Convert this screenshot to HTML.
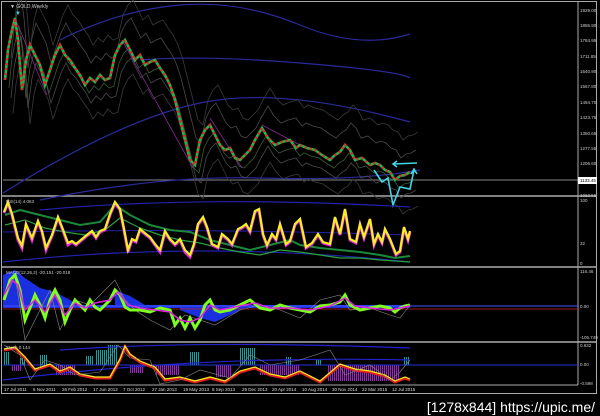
<!DOCTYPE html>
<html><head><meta charset="utf-8"><style>
html,body{margin:0;padding:0;background:#000;width:600px;height:416px;overflow:hidden}
svg{display:block}
text{font-family:"Liberation Sans",sans-serif}
</style></head><body>
<svg width="600" height="416" viewBox="0 0 600 416" xmlns="http://www.w3.org/2000/svg">
<defs>
<polyline id="pr" fill="none" points="5,80 8,50 12,30 15,18 18,40 22,90 26,60 30,45 35,55 40,65 45,85 50,70 55,55 60,45 65,55 70,60 75,68 80,75 85,85 90,78 95,82 100,75 105,80 110,78 115,55 120,45 125,40 130,50 135,60 140,55 145,65 150,62 155,60 160,68 165,75 170,85 175,100 180,120 185,140 190,160 195,165 200,140 205,130 210,125 215,135 220,145 225,150 230,148 235,158 240,160 245,155 250,150 255,140 262,128 268,138 275,145 282,142 290,140 296,148 300,145 307,148 315,150 322,155 330,160 335,155 340,152 345,145 350,150 355,160 362,158 370,165 375,163 380,165 385,170 390,172 395,180 400,176 405,175 410,172"/>
<pattern id="st" width="2" height="10" patternUnits="userSpaceOnUse"><rect width="1" height="10" fill="#18a0a0"/></pattern>
<pattern id="sp" width="2" height="10" patternUnits="userSpaceOnUse"><rect width="1" height="10" fill="#a020c8"/></pattern>
</defs>
<rect width="600" height="416" fill="#000"/>
<rect x="1.5" y="1.5" width="595" height="392" fill="none" stroke="#aaa" stroke-width="1"/>
<line x1="2" y1="196" x2="597" y2="196" stroke="#aaa" stroke-width="1.5"/>
<line x1="2" y1="267" x2="597" y2="267" stroke="#aaa" stroke-width="1.5"/>
<line x1="2" y1="342" x2="597" y2="342" stroke="#aaa" stroke-width="1.5"/>
<line x1="2" y1="385" x2="578" y2="385" stroke="#aaa" stroke-width="1"/>
<line x1="578" y1="2" x2="578" y2="385" stroke="#aaa" stroke-width="1"/>
<line x1="3" y1="180" x2="578" y2="180" stroke="#888" stroke-width="1"/>

<g fill="none" stroke="#2a2a9a" stroke-width="1.2">
<path d="M3,193 Q120,120 200,103 T410,122"/>
<path d="M60,40 Q120,10 180,5 T300,25 T410,34"/>
<path d="M140,60 Q200,55 300,63 T410,78"/>
<path d="M40,200 Q160,175 260,178 T420,170"/>
</g>
<g stroke-width="0.8">
<use href="#pr" transform="translate(6,-22)" stroke="#4a4a4a"/>
<use href="#pr" transform="translate(8,-40)" stroke="#3a3a3a"/>
<use href="#pr" transform="translate(6,18)" stroke="#4a4a4a"/>
<use href="#pr" transform="translate(8,34)" stroke="#3a3a3a"/>
<use href="#pr" transform="translate(4,8)" stroke="#3a5a3a"/>
</g>
<g stroke="#8a2a9a" stroke-width="0.8" fill="none">
<path d="M15,18 L47,95"/><path d="M122,40 L193,168"/><path d="M210,118 L242,168"/><path d="M262,125 L300,145"/>
</g>
<use href="#pr" stroke="#1db84a" stroke-width="2.6"/>
<use href="#pr" stroke="#e0262a" stroke-width="2.6" stroke-dasharray="2,3"/>
<g stroke="#3fd6e6" stroke-width="1.6" fill="none">
<polyline points="374,170 382,182 388,178 393,205 400,187 410,189 414,170"/>
<line x1="393" y1="164" x2="417" y2="163"/>
<polyline points="397,161 393,164 397,167"/>
<polyline points="411,174 414,169 417,174"/>
</g>
<text x="10" y="8" font-size="5" fill="#ccc">▼ GOLD,Weekly</text>
<text x="15" y="15" font-size="6" fill="#3fd6e6">▼</text>

<g fill="none">
<path d="M3,262 Q200,240 410,262" stroke="#2222aa" stroke-width="1.2"/>
<path d="M40,210 Q200,195 410,207" stroke="#2222aa" stroke-width="1.2"/>
<path d="M3,232 Q200,228 410,235" stroke="#2222aa" stroke-width="1"/>
<polyline stroke="#1a8a3a" stroke-width="2" points="5,215 20,210 40,215 60,220 80,225 100,222 115,205 130,215 150,225 170,230 190,232 210,240 230,245 250,250 270,245 290,240 300,245 320,248 340,250 360,252 380,255 395,258 410,256"/>
<polyline stroke="#2aa040" stroke-width="1.2" points="5,225 25,220 45,228 65,232 85,235 105,230 120,218 140,228 160,235 180,240 200,243 220,248 240,252 260,255 280,250 300,252 320,255 340,258 360,258 380,260 410,262"/>
<polyline stroke="#e020e0" stroke-width="3" points="4,213 8,203 12,215 18,240 22,248 26,225 32,240 38,222 42,232 46,250 52,236 58,218 62,228 68,245 72,242 76,245 82,240 88,235 92,232 96,238 100,232 105,230 110,215 115,203 120,210 124,230 128,252 132,240 136,242 140,230 146,235 150,238 155,245 160,252 165,232 170,240 175,245 180,240 185,252 190,257 194,245 198,225 203,218 207,228 212,245 218,248 222,235 228,240 232,245 238,230 242,228 246,225 250,232 255,212 259,210 263,235 267,246 272,235 276,240 280,225 286,245 290,242 295,225 300,220 306,248 312,244 318,235 323,243 330,245 335,218 340,235 345,210 350,240 356,243 360,225 364,238 370,220 374,245 378,235 382,243 385,230 390,240 396,255 400,252 404,228 408,240 410,232"/>
<polyline stroke="#f5f020" stroke-width="2.2" points="4,212 8,202 12,214 18,238 22,246 26,224 32,238 38,221 42,231 46,248 52,235 58,217 62,227 68,243 72,241 76,244 82,239 88,234 92,231 96,237 100,231 105,229 110,214 115,202 120,209 124,229 128,250 132,239 136,241 140,229 146,234 150,237 155,244 160,250 165,231 170,239 175,244 180,239 185,250 190,255 194,244 198,224 203,217 207,227 212,244 218,247 222,234 228,239 232,244 238,229 242,227 246,224 250,231 255,211 259,209 263,234 267,245 272,234 276,239 280,224 286,244 290,241 295,224 300,219 306,247 312,243 318,234 323,242 330,244 335,217 340,234 345,209 350,239 356,242 360,224 364,237 370,219 374,244 378,234 382,242 385,229 390,239 396,254 400,251 404,227 408,239 410,231"/>
</g>
<text x="6" y="203" font-size="4.5" fill="#ccc">RSI(14) 4.063</text>

<path d="M3,275 L15,270 L25,278 L40,288 L55,292 L70,300 L80,308 L3,308 Z" fill="#1a30e0"/>
<path d="M115,290 L130,296 L145,305 L150,308 L115,308 Z" fill="#1a30e0"/>
<path d="M180,310 L200,318 L215,322 L230,315 L245,308 L180,308 Z" fill="#1a30e0"/>
<rect x="3" y="305" width="407" height="3" fill="#1a30e0"/>
<line x1="3" y1="306" x2="578" y2="306" stroke="#4455ff" stroke-width="1"/>
<line x1="3" y1="309" x2="578" y2="309" stroke="#c02020" stroke-width="0.8"/>
<g fill="none">
<polyline stroke="#888" stroke-width="0.6" points="5,300 15,275 25,340 35,320 50,290 60,330 75,300 90,305 105,290 115,280 125,300 135,310 150,320 170,330 185,315 200,320 215,325 240,310 260,305 280,310 300,318 320,300 340,295 350,310 370,308 390,315 400,318 410,305"/>
<polyline stroke="#7dff20" stroke-width="3" points="4,300 10,280 15,275 20,290 25,320 30,308 35,295 40,305 45,318 50,300 55,290 60,300 65,322 70,310 75,300 80,305 85,310 90,300 95,307 100,310 110,300 115,290 120,295 125,307 130,310 140,310 150,312 160,308 170,310 175,325 180,318 185,328 190,318 195,328 200,320 205,305 210,300 215,310 220,312 230,310 240,305 250,300 260,308 270,310 280,305 290,308 300,310 310,312 320,306 330,305 340,302 345,295 350,305 360,310 370,308 380,306 390,308 395,312 400,308 405,306 410,305"/>
<polyline stroke="#e020e0" stroke-width="1.5" points="4,295 12,280 18,285 25,310 35,300 45,312 55,295 65,315 75,303 85,308 95,303 110,300 118,292 128,305 140,308 155,310 170,312 180,320 190,322 200,318 210,305 220,310 240,306 255,303 270,308 290,308 310,310 330,306 345,298 355,306 370,308 390,310 410,306"/>
</g>
<text x="6" y="274" font-size="4.5" fill="#ccc">MACD(12,26,2) -20.151 -20.018</text>

<g fill="url(#st)">
<rect x="4" y="352" width="6" height="13"/><rect x="20" y="358" width="6" height="7"/><rect x="40" y="355" width="8" height="10"/><rect x="86" y="356" width="8" height="9"/><rect x="96" y="350" width="12" height="15"/><rect x="108" y="345" width="10" height="20"/><rect x="190" y="352" width="10" height="13"/><rect x="240" y="348" width="16" height="17"/><rect x="285" y="357" width="6" height="8"/><rect x="316" y="360" width="6" height="5"/><rect x="404" y="357" width="6" height="8"/>
</g>
<g fill="url(#sp)">
<rect x="12" y="365" width="10" height="6"/><rect x="55" y="365" width="20" height="10"/><rect x="130" y="365" width="14" height="8"/><rect x="155" y="365" width="25" height="10"/><rect x="215" y="365" width="16" height="12"/><rect x="260" y="365" width="40" height="10"/><rect x="328" y="365" width="72" height="16"/>
</g>
<g fill="none">
<path d="M3,380 Q200,355 410,360" stroke="#2222cc" stroke-width="1.2"/>
<path d="M60,350 Q200,340 410,348" stroke="#2222cc" stroke-width="1.2"/>
<line x1="3" y1="365" x2="578" y2="365" stroke="#2233dd" stroke-width="1"/>
<polyline stroke="#e02020" stroke-width="3" points="4,350 15,348 25,358 35,370 50,365 60,372 70,368 80,375 95,378 110,378 120,360 125,347 130,355 140,362 155,368 165,380 180,378 195,382 210,378 225,382 240,372 255,368 270,375 285,378 300,372 320,382 340,365 355,370 370,372 385,376 395,382 405,378 410,380"/>
<polyline stroke="#f5f020" stroke-width="1.2" points="4,349 15,347 25,357 35,369 50,364 60,371 70,367 80,374 95,377 110,377 120,359 125,346 130,354 140,361 155,367 165,379 180,377 195,381 210,377 225,381 240,371 255,367 270,374 285,377 300,371 320,381 340,364 355,369 370,371 385,375 395,381 405,377 410,379"/>
<polyline stroke="#888" stroke-width="0.6" points="4,345 20,355 30,380 45,360 60,365 75,375 100,372 118,345 130,358 150,360 160,384 180,380 200,370 230,378 250,355 270,365 300,360 330,350 345,375 370,365 390,380 400,372 410,360"/>
</g>
<text x="6" y="349" font-size="4.5" fill="#ccc">Stoch 0.144</text>

<g font-size="4.5" fill="#ddd">
<text x="4" y="391">17 Jul 2011</text><text x="33" y="391">6 Nov 2011</text><text x="62" y="391">26 Feb 2012</text><text x="93" y="391">17 Jun 2012</text><text x="123" y="391">7 Oct 2012</text><text x="152" y="391">27 Jan 2013</text><text x="183" y="391">19 May 2013</text><text x="212" y="391">8 Sep 2013</text><text x="242" y="391">29 Dec 2013</text><text x="272" y="391">20 Apr 2014</text><text x="302" y="391">10 Aug 2014</text><text x="332" y="391">30 Nov 2014</text><text x="362" y="391">22 Mar 2015</text><text x="392" y="391">12 Jul 2015</text>
</g>
<g font-size="4.5" fill="#ccc">
<text x="580" y="12">1929.00</text><text x="580" y="27">1855.90</text><text x="580" y="42">1784.95</text><text x="580" y="58">1711.85</text><text x="580" y="73">1640.90</text><text x="580" y="88">1567.80</text><text x="580" y="104">1494.70</text><text x="580" y="119">1423.75</text><text x="580" y="135">1350.65</text><text x="580" y="150">1277.55</text><text x="580" y="165">1206.60</text><text x="580" y="197">1062.55</text>
<text x="580" y="202">100</text><text x="580" y="245">32</text><text x="580" y="265">0</text>
<text x="580" y="273">116.46</text><text x="580" y="308">0.00</text><text x="580" y="339">-105.749</text>
<text x="580" y="347">0.632</text><text x="580" y="366">0.00</text><text x="580" y="385">-0.598</text>
</g>
<rect x="578" y="177" width="19" height="7" fill="#fff"/>
<text x="580" y="182" font-size="4.5" fill="#000">1133.45</text>
<text x="595" y="412" font-size="14" fill="#fff" text-anchor="end">[1278x844] https://upic.me/</text>
</svg>
</body></html>
